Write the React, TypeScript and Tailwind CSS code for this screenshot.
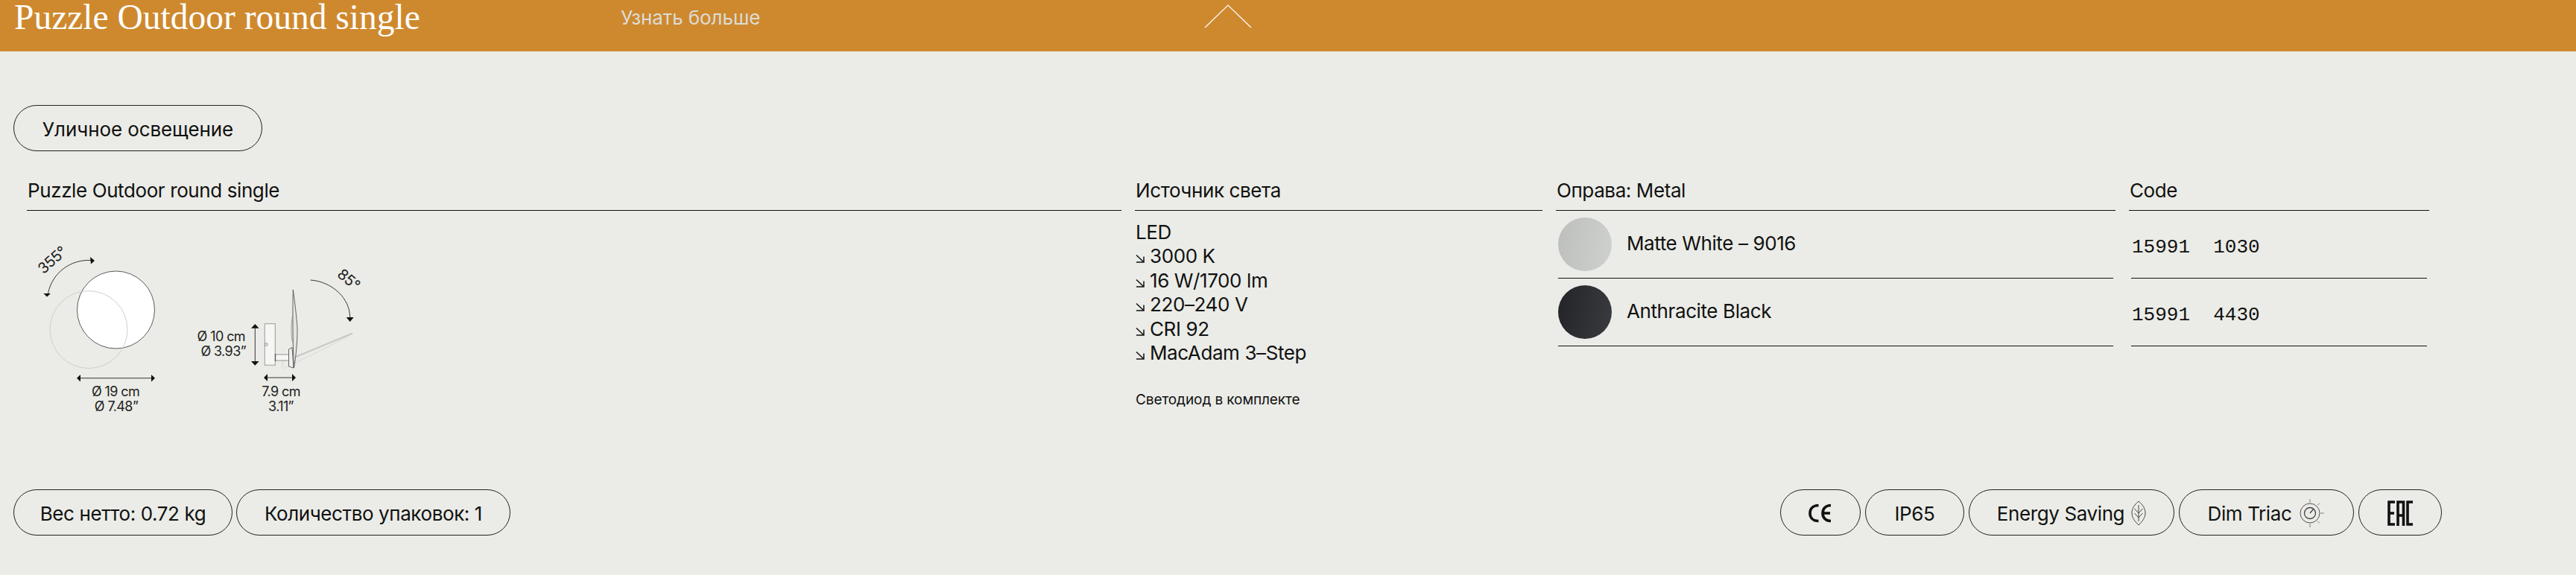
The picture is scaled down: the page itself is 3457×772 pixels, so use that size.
const sans = "font-['Inter','Liberation_Sans',sans-serif]";

function Pill({ children, className = '' }: { children: React.ReactNode; className?: string }) {
  return (
    <div className={`flex h-[62px] items-center justify-center rounded-full border border-[#222] pt-[2px] ${className}`}>
      {children}
    </div>
  );
}

function ArrowIcon() {
  return (
    <svg width="12" height="12" viewBox="0 0 12 12" fill="none" stroke="#111" strokeWidth="1.5" className="mr-[7px] mt-[13px] shrink-0">
      <path d="M1 1.5 L10 10 M1 11 H11 V3.5" />
    </svg>
  );
}

function LeafIcon() {
  return (
    <svg width="20" height="34" viewBox="0 0 20 34" fill="none" stroke="#444" strokeWidth="1" className="ml-[9px]">
      <path d="M10 1 C 16 6 19 11 19 17 C 19 23 15 28 10 33 C 5 28 1 23 1 17 C 1 11 4 6 10 1 Z" />
      <path d="M10 6 V28 M4.5 11 L10 17 L15.5 11 M4.5 17 L10 23 L15.5 17" />
    </svg>
  );
}

function DimIcon() {
  return (
    <svg width="34" height="40" viewBox="0 0 34 40" fill="none" stroke="#444" strokeWidth="0.9" className="ml-[11px]">
      <circle cx="14" cy="20" r="13" />
      <circle cx="14" cy="20" r="7.5" strokeWidth="1.3" />
      <path d="M14 20 L19 14" strokeWidth="1.3" />
      <path d="M14 1 V6 M14 34 V39 M28 20 H33 M24.3 9.3 L27 6.5 M24.3 30.7 L27 33.5" stroke="#777" />
    </svg>
  );
}

function CeLogo() {
  return (
    <svg width="32" height="26" viewBox="0 0 32 26" fill="none" stroke="#111" strokeWidth="3.6" aria-label="CE">
      <path d="M13.5 2.5 C 6 2.5 2 7 2 13 C 2 19 6 23.5 13.5 23.5" />
      <path d="M30 2.5 C 23 2.5 19 7 19 13 C 19 19 23 23.5 30 23.5 M19.5 13 H29" />
    </svg>
  );
}

function EacLogo() {
  return (
    <svg width="34" height="34" viewBox="0 0 34 34" fill="none" stroke="#111" strokeWidth="3.6" aria-label="EAC">
      <path d="M10 2 H2 V32 H10 M2 17 H9" />
      <path d="M14 34 V2 H21.5 V34 M14 20 H21.5" />
      <path d="M34 2 H27 V32 H34" />
    </svg>
  );
}

function Arrowheads({ d }: { d: string }) {
  return <path d={d} fill="#111" stroke="none" />;
}

// Dimension drawing of the lamp, coordinates follow the page pixels
function Drawing() {
  return (
    <svg width="460" height="240" viewBox="40 320 460 240" className="block" fontFamily="Inter,'Liberation Sans',sans-serif" fontSize="18" letterSpacing="-0.6" fill="#222">
      <circle cx="155.5" cy="416" r="52" fill="#fff" stroke="#333" strokeWidth="0.8" />
      <circle cx="119" cy="442.5" r="52" fill="none" stroke="#c9c9c6" strokeWidth="0.9" />

      <path d="M122 349.5 C 95 348 70 366 64.5 394" fill="none" stroke="#222" strokeWidth="0.9" />
      <Arrowheads d="M127 350 L121 345 L122 354.5 Z M63 398.5 L58.5 394 L68 394 Z" />
      <text x="70" y="356" fontSize="20" textAnchor="middle" transform="rotate(-42 70 349)">355°</text>

      <path d="M106 507.7 H205" stroke="#222" strokeWidth="0.9" />
      <Arrowheads d="M103 507.7 L108 503 V512.5 Z M208 507.7 L203 503 V512.5 Z" />
      <text x="155" y="532" textAnchor="middle">Ø 19 cm</text>
      <text x="156" y="552" textAnchor="middle">Ø 7.48”</text>

      {/* tilted disc, ghost position */}
      <path d="M379 486 L473 447.5 C 450 462 415 478 379 495 Z" fill="none" stroke="#d6d6d2" strokeWidth="0.9" />
      <path d="M390 482 L473 447.5" stroke="#c9c9c5" strokeWidth="2.4" />

      <rect x="355.3" y="434.7" width="14" height="55.5" fill="#f6f6f4" stroke="#9a9a98" strokeWidth="1" />
      <rect x="355.3" y="461" width="3.6" height="3" fill="#f6f6f4" stroke="#777" strokeWidth="0.7" />
      <rect x="369.5" y="476" width="18" height="8" fill="#f6f6f4" stroke="#8a8a88" strokeWidth="0.9" />
      <path d="M369.5 475 V485" stroke="#555" strokeWidth="1.3" />
      <path d="M387.5 469 L392 466.5 L394 494 L387.5 492 Z" fill="#f0f0ee" stroke="#555" strokeWidth="0.9" />
      <path d="M393.3 389 C 397 415 399.5 440 399 445 C 399 460 397 480 394.5 494 C 393 470 392.5 420 393.3 389 Z" fill="#e4e4e1" stroke="#555" strokeWidth="0.9" />
      <path d="M392.7 423 C 390.5 435 390.5 450 392.7 460" fill="none" stroke="#888" strokeWidth="0.8" />

      <path d="M416.7 376 C 445 378 470 400 469.7 427" fill="none" stroke="#222" strokeWidth="0.9" />
      <Arrowheads d="M469.7 432 L464.7 426 H474.7 Z" />
      <text x="468" y="382" fontSize="20" textAnchor="middle" transform="rotate(40 468 375)">85°</text>

      <path d="M342.3 438 V488" stroke="#222" strokeWidth="0.9" />
      <Arrowheads d="M342.3 435 L337 440.7 H347.6 Z M342.3 490.7 L337 485 H347.6 Z" />
      <text x="329" y="458" textAnchor="end">Ø 10 cm</text>
      <text x="330" y="478" textAnchor="end">Ø 3.93”</text>

      <path d="M357 507 H394" stroke="#222" strokeWidth="0.9" />
      <Arrowheads d="M354 507 L359 502 V512 Z M397 507 L392 502 V512 Z" />
      <text x="377" y="532" textAnchor="middle">7.9 cm</text>
      <text x="377" y="552" textAnchor="middle">3.11”</text>
    </svg>
  );
}

const specs = ['3000 K', '16 W/1700 lm', '220–240 V', 'CRI 92', 'MacAdam 3–Step'];

const finishes = [
  { name: 'Matte White – 9016', code: '15991  1030', swatch: 'bg-[linear-gradient(100deg,#bdbfbd,#cfd1cf)]' },
  { name: 'Anthracite Black', code: '15991  4430', swatch: 'bg-[linear-gradient(100deg,#232427,#3a3b3e)]' },
];

function ColHead({ children }: { children: React.ReactNode }) {
  return <div className="h-[43px] border-b border-[#111] pl-px leading-[32px]">{children}</div>;
}

export default function App() {
  return (
    <div className={`${sans} h-[772px] w-[3457px] overflow-hidden bg-[#ebece7] text-[26px] tracking-[-0.4px] text-[#111]`}>
      <header className="relative flex h-[69px] items-start bg-[#ce892e]">
        <h1 className="ml-[19px] w-[814px] font-['Liberation_Serif',serif] text-[47.5px] leading-[46px] tracking-normal text-white">
          Puzzle Outdoor round single
        </h1>
        <a className="mt-[8px] text-[26px] leading-[32px] tracking-[-0.1px] text-[#dcdcd6]">Узнать больше</a>
        <svg width="64" height="32" viewBox="0 0 64 32" fill="none" stroke="#fff" strokeWidth="1.2" className="absolute left-[1616px] top-[6px]">
          <path d="M1 31 L32 1 L63 31" />
        </svg>
      </header>

      <div className="pl-[18px] pt-[72px]">
        <Pill className="w-[334px] tracking-[-0.1px]">Уличное освещение</Pill>
      </div>

      <div className="mt-[37px] flex gap-[18px] pl-[36px]">
        <section className="w-[1469px]">
          <ColHead>Puzzle Outdoor round single</ColHead>
          <div className="ml-[4px] mt-[37px]">
            <Drawing />
          </div>
        </section>

        <section className="w-[547px]">
          <ColHead>Источник света</ColHead>
          <div className="mt-[13px] pl-px leading-[32.4px]">
            <div>LED</div>
            {specs.map((s) => (
              <div key={s} className="flex items-start">
                <ArrowIcon />
                {s}
              </div>
            ))}
          </div>
          <p className="mt-[35px] pl-px text-[19px] leading-[24px] tracking-[-0.1px]">Светодиод в комплекте</p>
        </section>

        <section className="w-[751px]">
          <ColHead>Оправа: Metal</ColHead>
          {finishes.map((f) => (
            <div key={f.name} className="mx-[3px] flex h-[91px] items-center gap-[20px] border-b border-[#111]">
              <div className={`h-[72px] w-[72px] rounded-full ${f.swatch}`} />
              <span className="mb-[4px]">{f.name}</span>
            </div>
          ))}
        </section>

        <section className="w-[403px]">
          <ColHead>Code</ColHead>
          {finishes.map((f) => (
            <div key={f.code} className="mx-[3px] flex h-[91px] items-center whitespace-pre border-b border-[#111] pl-[1px] pt-[8px] font-['Liberation_Mono',monospace] text-[26px] tracking-normal">
              {f.code}
            </div>
          ))}
        </section>
      </div>

      <div className="absolute left-0 top-[657px] flex w-[3277px] justify-between pl-[18px]">
        <div className="flex gap-[5px]">
          <Pill className="w-[294px]">Вес нетто: 0.72 kg</Pill>
          <Pill className="w-[368px]">Количество упаковок: 1</Pill>
        </div>
        <div className="flex gap-[6px]">
          <Pill className="w-[108px]"><CeLogo /></Pill>
          <Pill className="w-[133px]">IP65</Pill>
          <Pill className="w-[276px]">Energy Saving<LeafIcon /></Pill>
          <Pill className="w-[235px]">Dim Triac<DimIcon /></Pill>
          <Pill className="w-[112px]"><EacLogo /></Pill>
        </div>
      </div>
    </div>
  );
}
